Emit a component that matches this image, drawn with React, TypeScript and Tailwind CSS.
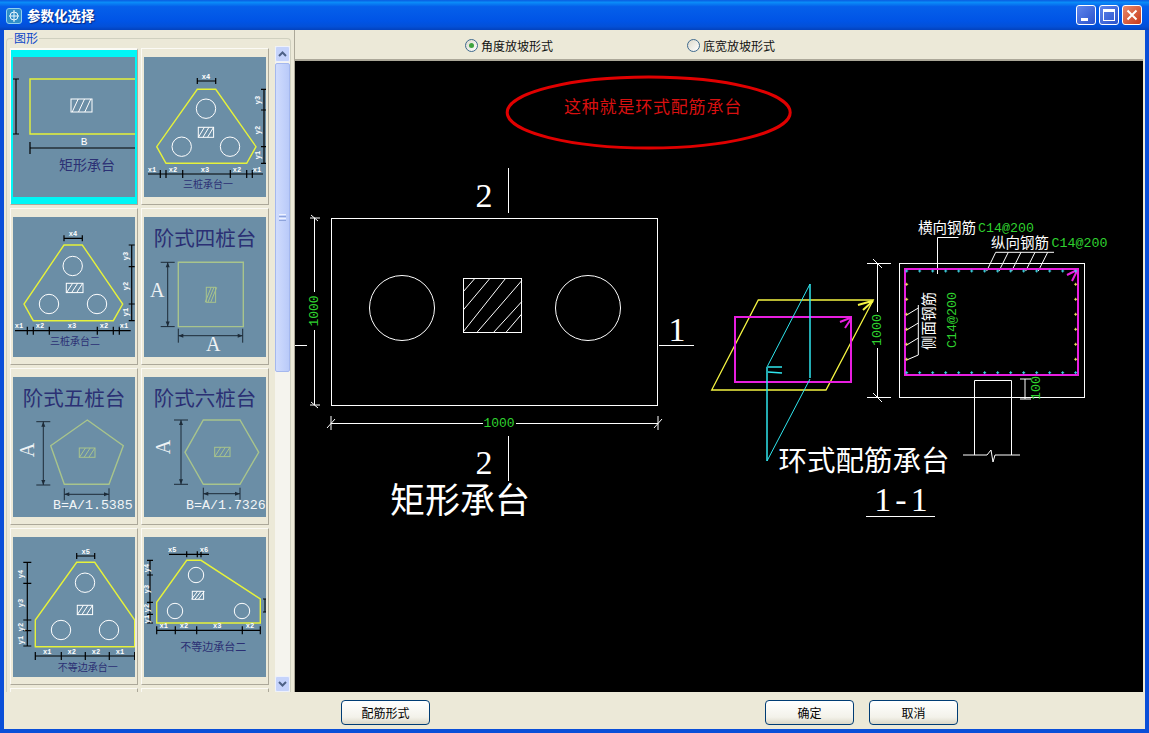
import React from "react";

const cjk = "font-['Noto_Sans_CJK_SC','Liberation_Sans',sans-serif]";
const YELLOW = "#e6f23a";
const SOFT = "#a8c48c";
const NAVY = "#2b3074";
const MONO = "font-['Liberation_Mono',monospace]";
const SERIF = "font-['Liberation_Serif',serif]";

type Pt = [number, number];

// horizontal dimension line with ticks
const HDim = ({ y, xs, from, to, h = 4 }: { y: number; xs: number[]; from?: number; to?: number; h?: number }) => (
  <path
    d={`M${from ?? xs[0]} ${y}H${to ?? xs[xs.length - 1]}` + xs.map((x) => `M${x} ${y - h}V${y + h}`).join("")}
    stroke="#000"
    strokeWidth={1.2}
    fill="none"
  />
);

const VDim = ({ x, ys, w = 3 }: { x: number; ys: number[]; w?: number }) => (
  <path
    d={`M${x} ${ys[0]}V${ys[ys.length - 1]}` + ys.map((y) => `M${x - w} ${y}H${x + w}`).join("")}
    stroke="#000"
    strokeWidth={1.2}
    fill="none"
  />
);

const Hatch = ({ x, y, w, h, color = "#fff" }: { x: number; y: number; w: number; h: number; color?: string }) => {
  const lines = [0.2, 0.5, 0.8].map((k) => `M${x + w * k - 3} ${y + h}L${x + w * k + 3} ${y}`).join("");
  return (
    <g stroke={color} fill="none" strokeWidth={1}>
      <rect x={x} y={y} width={w} height={h} />
      <path d={lines} />
    </g>
  );
};

const Poly = ({ pts, color = YELLOW }: { pts: Pt[]; color?: string }) => (
  <polygon points={pts.map((p) => p.join(",")).join(" ")} fill="none" stroke={color} strokeWidth={1.4} />
);

const Pile = ({ cx, cy, r = 9.7 }: { cx: number; cy: number; r?: number }) => (
  <circle cx={cx} cy={cy} r={r} fill="none" stroke="#fff" />
);

const Small = ({ x, y, t, rot }: { x: number; y: number; t: string; rot?: boolean }) => (
  <text
    x={x}
    y={y}
    fontSize={7}
    fontWeight={700}
    fill="#fff"
    textAnchor="middle"
    dominantBaseline="middle"
    className={MONO}
    transform={rot ? `rotate(-90 ${x} ${y})` : undefined}
  >
    {t}
  </text>
);

const Caption = ({ x, y, t, size = 10 }: { x: number; y: number; t: string; size?: number }) => (
  <text x={x} y={y + 1} fontSize={size} fill={NAVY} textAnchor="middle" dominantBaseline="middle" className={cjk}>
    {t}
  </text>
);

const BigTitle = ({ t }: { t: string }) => (
  <text x={61} y={23} fontSize={20.5} fill={NAVY} textAnchor="middle" dominantBaseline="middle" className={cjk}>
    {t}
  </text>
);

const Letter = ({ x, y, rot }: { x: number; y: number; rot?: boolean }) => (
  <text
    x={x}
    y={y}
    fontSize={20}
    fill="#eef2f4"
    textAnchor="middle"
    dominantBaseline="middle"
    className={SERIF}
    transform={rot ? `rotate(-90 ${x} ${y})` : undefined}
  >
    A
  </text>
);

const ArrowV = ({ x, y1, y2, w }: { x: number; y1: number; y2: number; w: number }) => (
  <g stroke="#1d2b38" fill="#1d2b38">
    <path d={`M${x} ${y1}V${y2}M${x - w} ${y1}H${x + w}M${x - w} ${y2}H${x + w}`} fill="none" />
    <path d={`M${x} ${y1}l-2 5h4zM${x} ${y2}l-2 -5h4z`} stroke="none" />
  </g>
);

const ArrowH = ({ y, x1, x2, h }: { y: number; x1: number; x2: number; h: number }) => (
  <g stroke="#1d2b38" fill="#1d2b38">
    <path d={`M${x1} ${y}H${x2}M${x1} ${y - h}V${y + h}M${x2} ${y - h}V${y + h}`} fill="none" />
    <path d={`M${x1} ${y}l5 -2v4zM${x2} ${y}l-5 -2v4z`} stroke="none" />
  </g>
);

const Formula = ({ x, t }: { x: number; t: string }) => (
  <text x={x} y={132} fontSize={13.3} fill="#f2f5f7" className={MONO}>
    {t}
  </text>
);

const thumbs: React.ReactNode[] = [
  <>
    <path d="M122 22H17V77H122" stroke={YELLOW} strokeWidth={1.4} fill="none" />
    <Hatch x={58} y={42} w={21} h={13} />
    <VDim x={3} ys={[22, 77]} />
    <text x={71} y={85} fontSize={11} fill="#fff" textAnchor="middle" dominantBaseline="middle" className={MONO}>
      B
    </text>
    <path d="M17 91H122M17 85V97" stroke="#000" strokeWidth={1.2} fill="none" />
    <Caption x={74} y={108} t="矩形承台" size={14} />
  </>,
  <>
    <Poly pts={[[53.3, 32.3], [71.7, 32.3], [112, 89.7], [102.7, 106.3], [22, 106.3], [12.7, 89.7]]} />
    <Pile cx={62} cy={51.7} />
    <Pile cx={37.7} cy={89.7} />
    <Pile cx={86} cy={89.7} />
    <Hatch x={54.3} y={70.3} w={15.3} h={10} />
    <HDim y={24} xs={[53.3, 71.7]} h={3} />
    <Small x={62} y={20} t="x4" />
    <VDim x={120} ys={[32.3, 53, 89.7, 106.3]} />
    <Small x={114} y={43} t="y3" rot />
    <Small x={114} y={73} t="y2" rot />
    <Small x={114} y={98} t="y1" rot />
    <HDim y={117} xs={[16.3, 22, 38.7, 86.3, 102.7, 108.3]} from={4} to={119} />
    {([[8, "x1"], [29, "x2"], [61, "x3"], [93, "x2"], [113, "x1"]] as [number, string][]).map(([x, t], i) => (
      <Small key={i} x={x} y={113} t={t} />
    ))}
    <Caption x={64} y={127} t="三桩承台一" />
  </>,
  <>
    <Poly pts={[[51, 28], [69.3, 28], [109.7, 87], [100.3, 103.7], [20.3, 103.7], [11, 87]]} />
    <Pile cx={59.7} cy={49} />
    <Pile cx={36} cy={87} />
    <Pile cx={84} cy={87} />
    <Hatch x={53.3} y={66.3} w={16.7} h={9.3} />
    <HDim y={21.3} xs={[51, 69.3]} h={3} />
    <Small x={60} y={17} t="x4" />
    <VDim x={118.7} ys={[28, 49.7, 87, 103.7]} />
    <Small x={112.7} y={39} t="y3" rot />
    <Small x={112.7} y={69} t="y2" rot />
    <Small x={112.7} y={95} t="y1" rot />
    <HDim y={113.7} xs={[14.3, 20.3, 36.3, 84.3, 100.3, 106.3]} from={2} to={117.7} />
    {([[6, "x1"], [27, "x2"], [59, "x3"], [91, "x2"], [111, "x1"]] as [number, string][]).map(([x, t], i) => (
      <Small key={i} x={x} y={109} t={t} />
    ))}
    <Caption x={62} y={124} t="三桩承台二" />
  </>,
  <>
    <BigTitle t="阶式四桩台" />
    <Poly color={SOFT} pts={[[34.3, 45.3], [99.3, 45.3], [99.3, 109.6], [34.3, 109.6]]} />
    <Hatch x={62.3} y={70.3} w={9.3} h={15} color={SOFT} />
    <ArrowV x={23.7} y1={45.3} y2={109.6} w={7} />
    <Letter x={13.3} y={75} />
    <ArrowH y={118.7} x1={34.3} x2={98.7} h={7} />
    <Letter x={69.3} y={129} />
  </>,
  <>
    <BigTitle t="阶式五桩台" />
    <Poly color={SOFT} pts={[[74.3, 43], [110.3, 68.7], [96, 107.3], [51.3, 107.3], [37.7, 68.7]]} />
    <Hatch x={66.3} y={71} w={15.7} h={9.3} color={SOFT} />
    <ArrowV x={30.3} y1={44.7} y2={108} w={7} />
    <Letter x={16.3} y={73} rot />
    <ArrowH y={117.3} x1={51.3} x2={96} h={6} />
    <Formula x={40} t="B=A/1.5385" />
  </>,
  <>
    <BigTitle t="阶式六桩台" />
    <Poly color={SOFT} pts={[[59.3, 43], [96, 43], [114.7, 75.3], [96, 107.3], [59.3, 107.3], [41, 75.3]]} />
    <Hatch x={70.7} y={70.3} w={15.3} h={9.3} color={SOFT} />
    <ArrowV x={37} y1={43} y2={107.3} w={7} />
    <Letter x={21.7} y={70} rot />
    <ArrowH y={116.7} x1={59.3} x2={96} h={6} />
    <Formula x={42} t="B=A/1.7326" />
  </>,
  <>
    <Poly pts={[[63.7, 25.3], [81.7, 25.3], [121.7, 83], [121.7, 109.7], [22.3, 109.7], [22.3, 83]]} />
    <Pile cx={72} cy={45.7} />
    <Pile cx={48} cy={93} />
    <Pile cx={96} cy={93} />
    <Hatch x={64.3} y={68.3} w={15.3} h={9.3} />
    <HDim y={19} xs={[63.7, 81.7]} h={3} />
    <Small x={72.7} y={15} t="x5" />
    <VDim x={14.3} ys={[25.3, 46.3, 83, 93.7, 109]} w={4} />
    <Small x={8} y={37} t="y4" rot />
    <Small x={8} y={66} t="y3" rot />
    <Small x={8} y={90} t="y2" rot />
    <Small x={8} y={103} t="y1" rot />
    <HDim y={119} xs={[22.3, 48.3, 72.3, 96.3, 121.7]} />
    {([[34.3, "x1"], [58.7, "x2"], [83, "x2"], [107, "x1"]] as [number, string][]).map(([x, t], i) => (
      <Small key={i} x={x} y={115} t={t} />
    ))}
    <Caption x={74.7} y={130} t="不等边承台一" />
  </>,
  <>
    <Poly pts={[[42.7, 23.3], [57, 23.3], [116.3, 62], [116.3, 86], [12.7, 86], [12.7, 65.3]]} />
    <Pile cx={52} cy={38} r={7.7} />
    <Pile cx={31} cy={74} r={7.7} />
    <Pile cx={98} cy={74} r={7.7} />
    <Hatch x={48.3} y={54.3} w={11.3} h={8} />
    <HDim y={17.3} xs={[42.7, 53.3, 57]} from={25} to={65} h={3} />
    <Small x={28.3} y={13} t="x5" />
    <Small x={60} y={13} t="x6" />
    <VDim x={6} ys={[23.3, 38, 65.3, 77.3, 86]} />
    <Small x={3} y={31} t="y4" rot />
    <Small x={3} y={52} t="y3" rot />
    <Small x={3} y={71} t="y2" rot />
    <Small x={3} y={82} t="y1" rot />
    <path d="M121 62V75M119 62H122M119 75H122" stroke="#000" fill="none" />
    <HDim y={93.3} xs={[12.7, 31.3, 52.7, 98.3, 116.3]} />
    {([[19.7, "x1"], [40, "x2"], [73.3, "x3"], [106, "x2"]] as [number, string][]).map(([x, t], i) => (
      <Small key={i} x={x} y={89} t={t} />
    ))}
    <Caption x={69.3} y={110} t="不等边承台二" size={11} />
  </>,
];

const Thumb = ({ selected, children }: { selected?: boolean; children?: React.ReactNode }) => (
  <div
    className={
      selected
        ? "h-[157px] border border-t-2 border-[#fbfaf5] border-r-[#aca899] border-b-[#aca899] bg-[#00f6f6] pt-[7px] px-[2px] pb-[7px]"
        : "h-[157px] border border-[#fbfaf5] border-r-[#aca899] border-b-[#aca899] bg-[#ece9d8] pt-[8px] px-[2px] pb-[7px]"
    }
  >
    <svg width="122" height="140" viewBox="0 0 122 140" className="block bg-[#6b8ea6]">
      {children}
    </svg>
  </div>
);

const ScrollBar = () => (
  <div className="flex h-full w-[15px] shrink-0 flex-col bg-[#f5f4ee]">
    <div className="flex h-[16px] items-center justify-center rounded-[2px] border border-[#eef1fb] bg-[#c5d3fb]">
      <svg width="9" height="6" viewBox="0 0 9 6">
        <path d="M1 5l3.5-3.5L8 5" fill="none" stroke="#4d6185" strokeWidth="2" />
      </svg>
    </div>
    <div className="mt-[1px] flex h-[309px] flex-col items-center justify-center gap-[1px] rounded-[2px] border border-[#a5b8ee] bg-[linear-gradient(90deg,#d0dcfd,#b9caf9)]">
      <div className="h-px w-[7px] bg-[#eef2fe]" />
      <div className="h-px w-[7px] bg-[#8ea4dc]" />
      <div className="h-px w-[7px] bg-[#eef2fe]" />
      <div className="h-px w-[7px] bg-[#8ea4dc]" />
    </div>
    <div className="flex-1" />
    <div className="flex h-[16px] items-center justify-center rounded-[2px] border border-[#eef1fb] bg-[#c5d3fb]">
      <svg width="9" height="6" viewBox="0 0 9 6">
        <path d="M1 1l3.5 3.5L8 1" fill="none" stroke="#4d6185" strokeWidth="2" />
      </svg>
    </div>
  </div>
);

const Radio = ({ label, checked, className }: { label: string; checked?: boolean; className: string }) => (
  <div className={`flex items-center gap-[3px] text-[12px] text-[#111] ${className}`}>
    <span className="flex h-[13px] w-[13px] items-center justify-center rounded-full border border-[#3f6a8e] bg-[linear-gradient(135deg,#dcd9cc,#fff)]">
      {checked && <span className="h-[5px] w-[5px] rounded-full bg-[#3ea33e]" />}
    </span>
    {label}
  </div>
);

const XpButton = ({ label, className }: { label: string; className: string }) => (
  <button
    className={`h-[25px] w-[89px] rounded-[4px] border border-[#003c74] bg-[linear-gradient(180deg,#ffffff,#f3f2ea_70%,#dcd8c8)] text-[12px] text-black ${className}`}
  >
    {label}
  </button>
);

const TitleBar = () => (
  <div className="flex h-[30px] shrink-0 items-center bg-[linear-gradient(180deg,#0a5be0_0%,#0a8cf8_8%,#0560ea_22%,#0054e6_70%,#0350d8_88%,#0342bd_100%)] pl-[6px] pr-[7px]">
    <svg width="16" height="16" viewBox="0 0 16 16" className="mt-[1px]">
      <rect x="0.5" y="0.5" width="15" height="15" rx="2.5" fill="#2f8fc9" stroke="#8fd0ef" />
      <path d="M8 2V14M3 8H13" stroke="#e8f6fb" />
      <circle cx="8" cy="8" r="4" fill="none" stroke="#e8f6fb" />
    </svg>
    <span className="ml-[5px] text-[13.5px] font-bold text-white [text-shadow:1px_1px_1px_#0a2a80]">参数化选择</span>
    <div className="ml-auto flex gap-[3px]">
      <div className="relative h-[20px] w-[20px] rounded-[3px] border border-white bg-[linear-gradient(135deg,#5f86ec,#2a52cc)]">
        <span className="absolute bottom-[3px] left-[4px] h-[3px] w-[7px] bg-white" />
      </div>
      <div className="flex h-[20px] w-[20px] items-center justify-center rounded-[3px] border border-white bg-[linear-gradient(135deg,#5f86ec,#2a52cc)]">
        <span className="h-[12px] w-[12px] border border-t-[3px] border-white" />
      </div>
      <div className="flex h-[20px] w-[20px] items-center justify-center rounded-[3px] border border-white bg-[linear-gradient(135deg,#e88a6c,#c8391a)]">
        <svg width="12" height="12" viewBox="0 0 12 12">
          <path d="M1.5 1.5L10.5 10.5M10.5 1.5L1.5 10.5" stroke="#fff" strokeWidth="2" />
        </svg>
      </div>
    </div>
  </div>
);

// rebar dots along the stirrup
const Dots = ({ pts, color }: { pts: Pt[]; color: string }) => (
  <path d={pts.map(([x, y]) => `M${x - 1.5} ${y}H${x + 1.5}M${x} ${y - 1.5}V${y + 1.5}`).join("")} stroke={color} />
);

const hDots = Array.from({ length: 14 }, (_, i) => 906.7 + i * 13);
const vDots = [284.3, 299.3, 314.3, 329.3, 344.3, 359.3];
const GREEN = "#2fd12f";

const Drawing = () => (
  <svg viewBox="295 61 848 630" width="848" height="630" className="block">
    {/* 说明 */}
    <ellipse cx="648.7" cy="112.5" rx="141.5" ry="35.5" fill="none" stroke="#e00000" strokeWidth="3" />
    <text x="653" y="108" fontSize="17" letterSpacing="0.8" fill="#d81010" textAnchor="middle" dominantBaseline="middle" className={cjk}>
      这种就是环式配筋承台
    </text>

    {/* 平面 */}
    <g stroke="#fff" fill="none">
      <rect x="331.5" y="218.5" width="326" height="187" />
      <circle cx="402" cy="308" r="32.5" />
      <circle cx="588" cy="308" r="32.5" />
      <rect x="463.5" y="278.5" width="58" height="54" />
      <path d="M463.3 291.7L475 278.3M463.3 310L490 278.3M463.3 331.7L505.7 278.3M476.7 332.7L521.7 280.7M493.3 332.7L521.7 301.7M505.7 332.7L521.7 314" />
      <path d="M508.5 168V213M508.5 436V481M659 345.5H694M295 345.5H307" />
      <path d="M314.5 218V292M314.5 330V405M310 218H320M310 405H320M311 215L318 221M311 402L318 408" />
      <path d="M331 423.5H483M516 423.5H658M331 416V430M658 416V430M327 428L335 419M654 428L662 419" />
    </g>
    <text x="315" y="311" fontSize="13" fill={GREEN} textAnchor="middle" dominantBaseline="middle" transform="rotate(-90 315 311)" className={MONO}>
      1000
    </text>
    <text x="499" y="424" fontSize="13" fill={GREEN} textAnchor="middle" dominantBaseline="middle" className={MONO}>
      1000
    </text>
    <text x="484" y="207" fontSize="34" fill="#fff" textAnchor="middle" className={SERIF}>2</text>
    <text x="484" y="474" fontSize="34" fill="#fff" textAnchor="middle" className={SERIF}>2</text>
    <text x="677" y="341" fontSize="34" fill="#fff" textAnchor="middle" className={SERIF}>1</text>
    <text x="460" y="503" fontSize="35" fill="#fff" textAnchor="middle" dominantBaseline="middle" className={cjk}>
      矩形承台
    </text>

    {/* 三维示意 */}
    <polygon points="758.3,300 873.3,300 826,390 711.7,390" fill="none" stroke="#f5f542" strokeWidth="1.3" />
    <path d="M858 305L872 301M863 310L873 301" stroke="#f5f542" strokeWidth="2" />
    <rect x="735" y="317" width="116" height="65" fill="none" stroke="#e81ee0" strokeWidth="2" />
    <path d="M840 322L850 318M845 328L851 319" stroke="#e81ee0" strokeWidth="2" />
    <g stroke="#2fe6ee" fill="none">
      <path d="M810 284V378" strokeWidth="1.5" />
      <path d="M810 284L767 367" />
      <path d="M767 367V461" strokeWidth="1.5" />
      <path d="M767 461L810 379" />
      <path d="M768 367H782M768 372L782 373" strokeWidth="1.5" />
    </g>

    {/* 1-1 剖面 */}
    <g stroke="#fff" fill="none">
      <rect x="899.5" y="263.5" width="185" height="134" />
      <path d="M877.5 263V312M877.5 348V397M867 263.5H891M867 397.5H891M873 259L882 268M873 393L882 402" />
      <path d="M958.5 237.5H937.5V274" />
      <path d="M995.7 252.3H1054M995.7 252.3L986.7 271M1008.3 252.3L999 271M1021 252.3L1011.7 271M1035 252.3L1025.7 271M1047.7 252.3L1038.3 271" />
      <path d="M918.3 305V355M918.3 308L906.7 315M918.3 323L906.7 330M918.3 338L906.7 345M918.3 355L906.7 360" />
      <path d="M974.5 455V380.5H1011.5V455M963 455H987L991 450L993 462L995 455H1020" />
      <path d="M1025 379V399M1020 379H1031M1020 399H1031" />
      <path d="M866 516.5H935" />
    </g>
    <rect x="905" y="269" width="173" height="106" fill="none" stroke="#e81ee0" strokeWidth="2" />
    <path d="M1067 275L1077 270M1072 281L1077 271" stroke="#e81ee0" strokeWidth="2" />
    <Dots pts={hDots.map((x): Pt => [x, 271])} color="#3fd8e8" />
    <Dots pts={hDots.map((x): Pt => [x, 372.7])} color="#3fd8e8" />
    <Dots pts={vDots.map((y): Pt => [906.7, y])} color="#f0e060" />
    <Dots pts={vDots.map((y): Pt => [1075.7, y])} color="#f0e060" />

    <text x="918" y="233" fontSize="14.5" fill="#fff" className={cjk}>横向钢筋</text>
    <text x="978" y="232" fontSize="13.3" fill={GREEN} className={MONO}>C14@200</text>
    <text x="991" y="248" fontSize="14.5" fill="#fff" className={cjk}>纵向钢筋</text>
    <text x="1051.5" y="247" fontSize="13.3" fill={GREEN} className={MONO}>C14@200</text>
    <text x="930" y="321" fontSize="14.5" fill="#fff" textAnchor="middle" dominantBaseline="middle" transform="rotate(-90 930 321)" className={cjk}>
      侧面钢筋
    </text>
    <text x="952" y="320" fontSize="13.3" fill={GREEN} textAnchor="middle" dominantBaseline="middle" transform="rotate(-90 952 320)" className={MONO}>
      C14@200
    </text>
    <text x="877.7" y="330" fontSize="13.3" fill={GREEN} textAnchor="middle" dominantBaseline="middle" transform="rotate(-90 877.7 330)" className={MONO}>
      1000
    </text>
    <text x="1036" y="388" fontSize="13.3" fill={GREEN} textAnchor="middle" dominantBaseline="middle" transform="rotate(-90 1036 388)" className={MONO}>
      100
    </text>
    <text x="864" y="463" fontSize="28.5" fill="#fff" textAnchor="middle" dominantBaseline="middle" className={cjk}>
      环式配筋承台
    </text>
    <text x="903" y="511" fontSize="34" letterSpacing="4" fill="#fff" textAnchor="middle" className={SERIF}>1-1</text>
  </svg>
);

export default function App() {
  return (
    <div className={`flex h-[733px] w-[1149px] flex-col overflow-hidden bg-[#0a4fd8] ${cjk}`}>
      <TitleBar />
      <div className="mx-[4px] flex min-h-0 flex-1 flex-col bg-[#ece9d8]">
        <div className="flex h-[662px] min-h-0">
          {/* 左侧图形列表 */}
          <div className="relative h-full w-[290px] shrink-0 overflow-hidden pl-[2px] pt-[8px]">
            <span className="absolute left-[9px] top-0 bg-[#ece9d8] px-[1px] text-[12px] leading-[16px] text-[#0a46c8]">图形</span>
            <div className="flex h-[660px] w-[285px] rounded-t-[4px] border border-b-0 border-[#d0d0bf] pl-[3px] pr-[1px] pt-[7px]">
              <div className="grid h-[646px] w-[261px] shrink-0 grid-cols-[128px_128px] content-start gap-[3px] overflow-hidden pt-[2px]">
                {thumbs.map((t, i) => (
                  <Thumb key={i} selected={i === 0}>
                    {t}
                  </Thumb>
                ))}
                <Thumb />
                <Thumb />
              </div>
              <div className="ml-[4px] h-[646px]">
                <ScrollBar />
              </div>
            </div>
          </div>
          {/* 右侧预览 */}
          <div className="flex min-w-0 flex-1 flex-col border-l border-[#aca899] pr-[2px]">
            <div className="flex h-[31px] shrink-0 items-center border-b-2 border-[#aca899] pt-[2px]">
              <Radio label="角度放坡形式" checked className="ml-[170px]" />
              <Radio label="底宽放坡形式" className="ml-[134px]" />
            </div>
            <div className="flex-1 bg-black">
              <Drawing />
            </div>
          </div>
        </div>
        <div className="flex flex-1 items-start pt-[8px]">
          <XpButton label="配筋形式" className="ml-[337px]" />
          <XpButton label="确定" className="ml-[335px]" />
          <XpButton label="取消" className="ml-[15px]" />
        </div>
      </div>
      <div className="h-[4px] shrink-0" />
    </div>
  );
}
